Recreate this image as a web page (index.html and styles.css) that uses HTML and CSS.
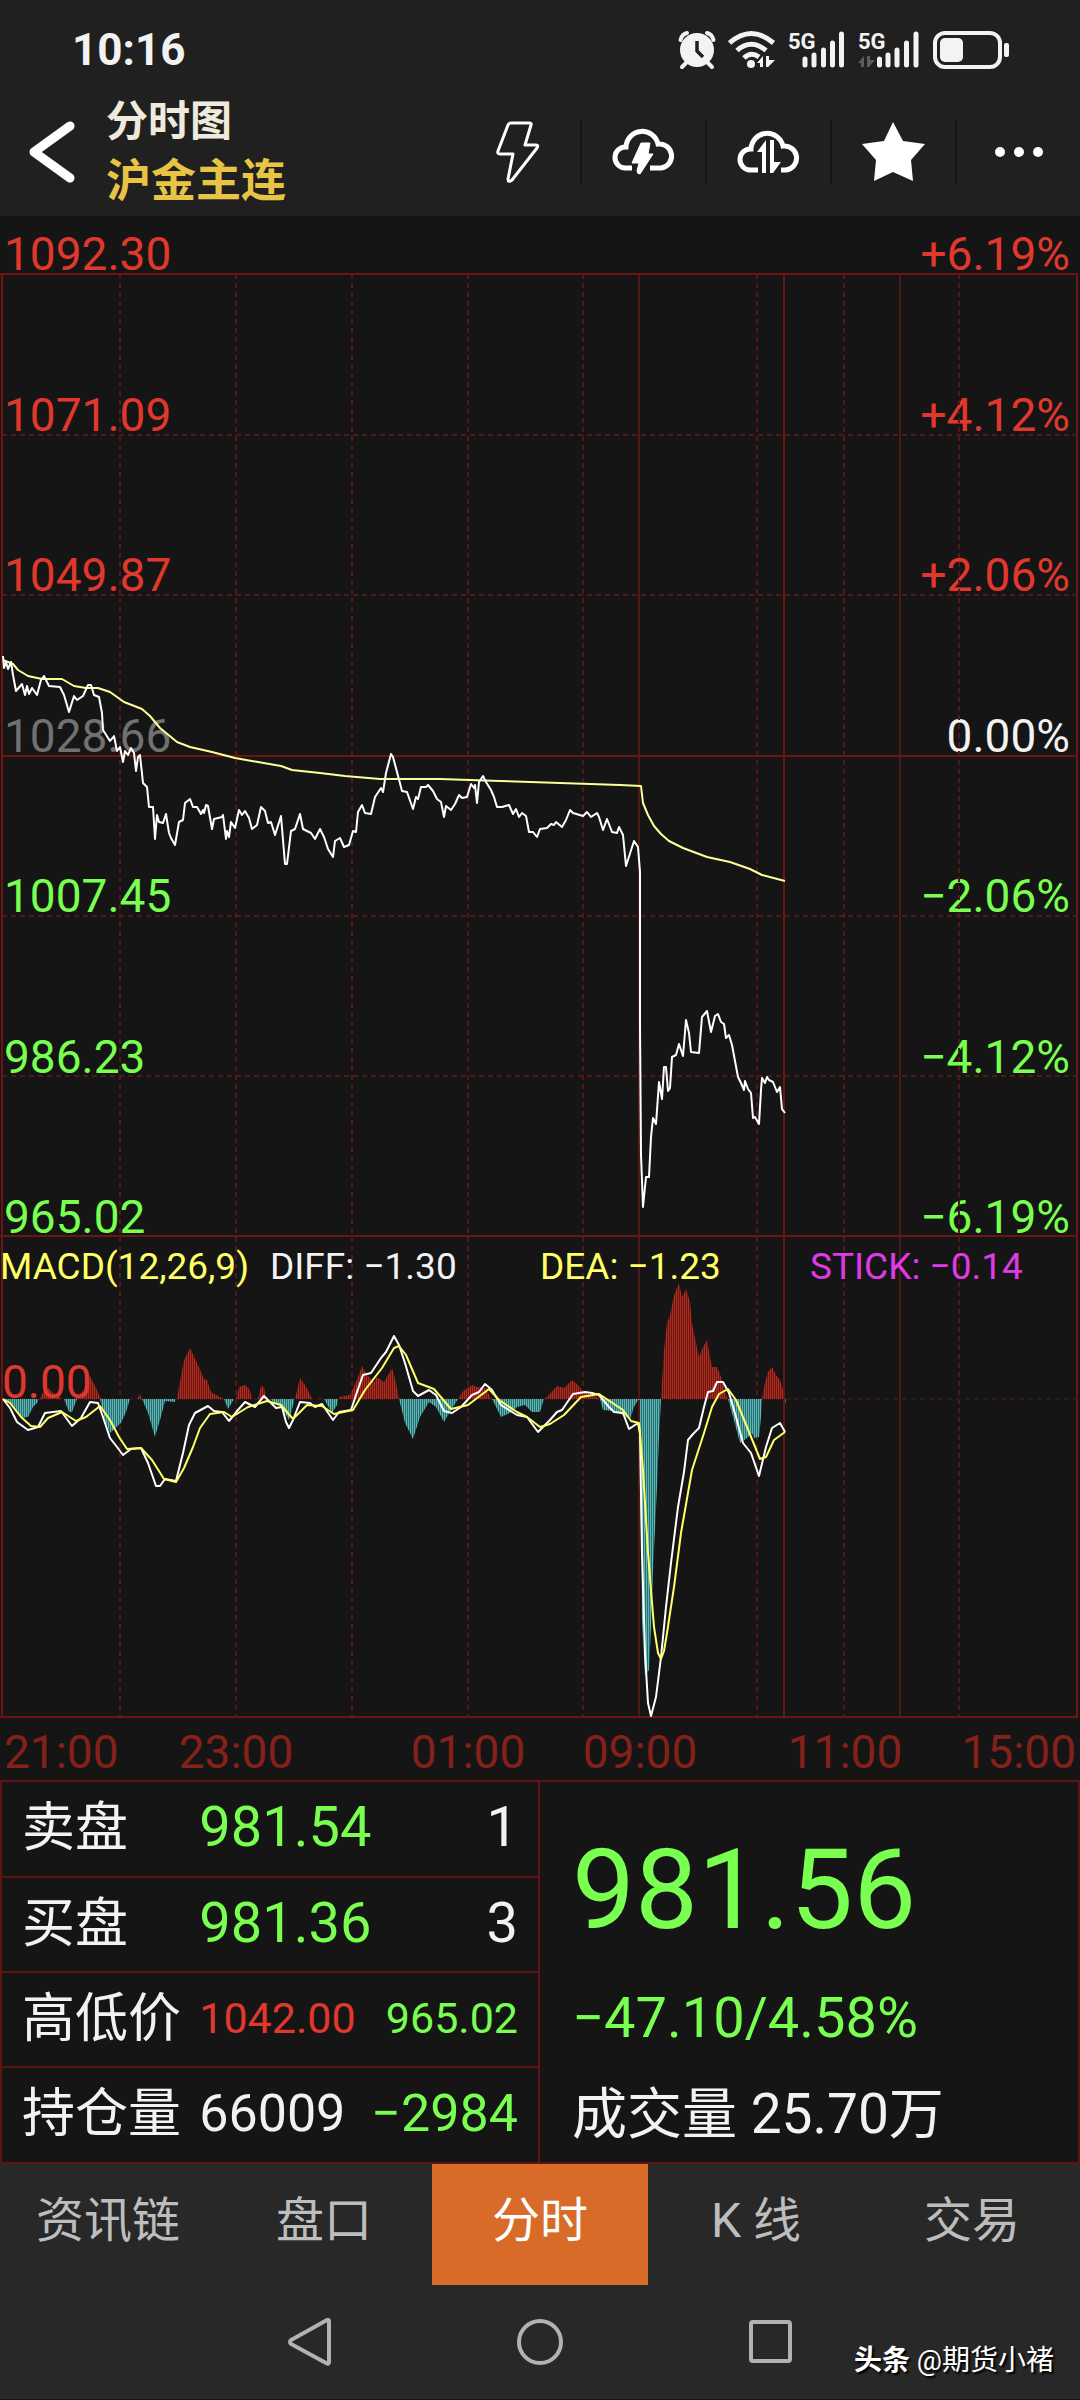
FILE: index.html
```html
<!DOCTYPE html>
<html lang="zh-CN">
<head>
    <meta charset="UTF-8">
    <meta name="viewport" content="width=device-width, initial-scale=1.0">
    <title>沪金主连 分时图</title>
    <link rel="stylesheet" href="styles.css">
</head>
<body>
    <div class="app">
        <header class="header">
            <div class="status-bar">
                <span class="clock">10:16</span>
                <div class="status-icons">
                    <!-- Alarm -->
                    <svg width="38" height="40" viewBox="0 0 38 40">
                        <g fill="none" stroke="#f3f3f3" stroke-linecap="round">
                            <path d="M2.500 10Q4 4 9 3M35.500 10Q34 4 29 3" stroke-width="4"/>
                            <path d="M8 33L4 37M30 33L34 37" stroke-width="4"/>
                        </g>
                        <circle cx="19" cy="20" r="17" fill="#f3f3f3"/>
                        <path d="M19 11V21L25 27" fill="none" stroke="#202020" stroke-width="3.500"/>
                    </svg>
                    <!-- Wifi -->
                    <svg width="48" height="40" viewBox="0 0 48 40">
                        <g fill="none" stroke="#f3f3f3" stroke-width="5">
                            <path d="M1.500 13Q23 -6 45.500 13"/>
                            <path d="M9 20.500Q23 8 38 20.500"/>
                            <path d="M16 28Q23 21 31 27"/>
                        </g>
                        <circle cx="23" cy="34" r="4" fill="#f3f3f3"/>
                        <path d="M29 33L35 26V37H32V33ZM38 26H41V30H47L40 37H38Z" fill="#f3f3f3"/>
                    </svg>
                    <!-- SIM 1 -->
                    <svg width="58" height="56" viewBox="0 -8 58 56">
                        <text x="0" y="19" class="net-type">5G</text>
                        <path d="M17 29V35M26 25V35M35.500 20V35M44.500 13V35M53.500 4V35" class="signal"/>
                    </svg>
                    <!-- SIM 2 -->
                    <svg width="62" height="56" viewBox="0 -8 62 56">
                        <text x="0" y="19" class="net-type">5G</text>
                        <path d="M0 33L6 26V37H3V33ZM9 26H12V30H17L11 37H9Z" fill="#5c5c5c"/>
                        <path d="M21.500 29V35M30 25V35M39 20V35M48.500 13V35M58 4V35" class="signal"/>
                    </svg>
                    <!-- Battery -->
                    <svg width="78" height="40" viewBox="0 0 78 40">
                        <rect x="3" y="3" width="65" height="34" rx="10" fill="none" stroke="#f3f3f3" stroke-width="4"/>
                        <rect x="8" y="8" width="23" height="24" rx="5" fill="#f3f3f3"/>
                        <rect x="72" y="13" width="5" height="14" rx="2" fill="#f3f3f3"/>
                    </svg>
                </div>
            </div>

            <div class="toolbar">
                <button class="back" aria-label="返回">
                    <svg width="48" height="64" viewBox="0 0 48 64">
                        <path d="M42 6L6 32L42 58" fill="none" stroke="#fff" stroke-width="9" stroke-linecap="round" stroke-linejoin="round"/>
                    </svg>
                </button>
                <div class="title">
                    <h1>分时图</h1>
                    <h2>沪金主连</h2>
                </div>
                <div class="actions">
                    <button aria-label="闪电下单">
                        <svg width="64" height="64" viewBox="0 0 64 64">
                            <path d="M25 3H43Q46 3 45 5L39 25H50Q53 25 51 28L26 60Q22 63 22 59L27 34H14Q11 34 12 31L22 5Q23 3 25 3Z" fill="none" stroke="#fff" stroke-width="3" stroke-linejoin="round"/>
                        </svg>
                    </button>
                    <button aria-label="云条件单">
                        <svg width="64" height="64" viewBox="0 0 64 64">
                            <path d="M20 48H13A10.500 10.500 0 0 1 14 27A16.200 16.200 0 0 1 46 24A12 12 0 0 1 49 48H38" fill="none" stroke="#fff" stroke-width="5"/>
                            <path d="M29 23H38L36 34H41L28 54Q25 54 25 51L27 43H20Z" fill="#fff" stroke="#fff" stroke-width="1" stroke-linejoin="round"/>
                        </svg>
                    </button>
                    <button aria-label="云止损">
                        <svg width="64" height="64" viewBox="0 0 64 64">
                            <path d="M21 50H13A10.500 10.500 0 0 1 14 29A16.200 16.200 0 0 1 46 26A12 12 0 0 1 49 50H44" fill="none" stroke="#fff" stroke-width="5"/>
                            <path d="M20 32L29 20V53H25V32ZM33 20H37V42H44L36 53H33Z" fill="#fff"/>
                        </svg>
                    </button>
                    <button aria-label="自选">
                        <svg width="64" height="64" viewBox="0 0 64 64">
                            <path d="M31 2L41 21L63 24L49 40L51 61L31 52L12 61L14 40L0 24L22 21Z" fill="#fff"/>
                        </svg>
                    </button>
                    <button aria-label="更多">
                        <svg width="64" height="64" viewBox="0 0 64 64" fill="#fff">
                            <circle cx="13" cy="32" r="5"/>
                            <circle cx="32" cy="32" r="5"/>
                            <circle cx="51" cy="32" r="5"/>
                        </svg>
                    </button>
                </div>
            </div>
        </header>

        <main>
            <!-- Price chart -->
            <section class="panel">
                <div class="scales">
                    <ul class="scale">
                        <li class="up">1092.30</li>
                        <li class="up">1071.09</li>
                        <li class="up">1049.87</li>
                        <li class="base">1028.66</li>
                        <li class="down">1007.45</li>
                        <li class="down">986.23</li>
                        <li class="down">965.02</li>
                    </ul>
                    <ul class="scale right">
                        <li class="up">+6.19%</li>
                        <li class="up">+4.12%</li>
                        <li class="up">+2.06%</li>
                        <li>0.00%</li>
                        <li class="down">−2.06%</li>
                        <li class="down">−4.12%</li>
                        <li class="down">−6.19%</li>
                    </ul>
                </div>
                <svg class="plot" viewBox="0 216 1080 1021">
                    <path class="grid dashed" d="M120 274V1237M236 274V1237M352 274V1237M468 274V1237M583 274V1237M757 274V1237M844 274V1237M959 274V1237M2 435H1077M2 595H1077M2 916H1077M2 1076H1077"/>
                    <path class="grid thin" d="M639 274V1237M900 274V1237"/>
                    <path class="grid" d="M784 274V1237M2 756H1077M0 274H1078M2 274V1237M1077 274V1237M0 1236H1078"/>
                    <polyline class="line average" points="3,660 13,664 18,670 28,676 42,679 62,679 74,686 86,688 98,688 110,692 124,702 142,709 150,716 160,728 177,742 190,747 212,752 235,758 258,762 281,766 292,770 320,773 345,776 380,779 440,779 500,781 560,783 620,785 641,786 643,803 648,815 654,826 661,834 669,841 683,848 707,857 730,862 750,869 762,875 785,881"/>
                    <polyline class="line" points="3,656 4,668 6,662 8,669 11,662 13,675 16,691 22,684 25,695 27,686 29,694 32,688 37,695 41,680 44,676 49,686 60,687 64,695 69,712 74,696 77,700 83,696 88,685 91,685 94,695 99,697 102,713 103,730 110,741 114,736 117,751 120,747 123,762 125,751 128,755 131,748 134,753 136,771 138,757 140,755 143,783 147,787 149,807 153,807 155,839 157,815 159,822 163,823 166,814 169,833 171,838 175,845 179,822 183,820 185,803 190,799 193,807 197,807 201,814 203,810 204,813 206,805 208,806 212,829 214,819 222,817 223,815 226,839 227,831 229,837 231,822 235,828 239,810 242,815 245,811 249,818 252,829 257,825 261,807 265,811 268,823 271,822 275,835 281,816 285,864 287,864 291,831 295,829 300,814 303,829 311,833 315,839 320,829 324,837 328,849 333,857 335,841 340,838 344,847 349,845 353,831 356,832 358,812 362,805 365,813 371,814 375,797 381,788 383,792 386,773 391,754 393,757 397,772 402,791 407,792 413,809 416,797 418,799 421,787 426,787 428,785 433,791 437,799 441,802 444,817 446,806 451,810 455,804 459,795 462,798 467,797 471,784 474,788 475,785 477,803 479,782 483,776 486,782 491,790 494,797 497,807 502,807 509,805 513,814 516,809 519,817 522,813 526,816 529,832 533,832 537,837 540,829 547,828 551,824 554,825 556,822 562,827 566,820 570,810 573,813 583,816 587,812 591,817 597,813 599,817 603,830 607,819 612,832 617,833 619,827 623,835 626,866 634,841 638,847 640,872 640,1027 641,1155 643,1207 646,1177 649,1177 651,1137 653,1118 656,1124 659,1082 662,1099 664,1067 666,1067 668,1091 670,1088 672,1057 676,1055 679,1044 683,1056 686,1020 689,1033 691,1052 699,1053 702,1017 707,1011 711,1032 715,1016 718,1014 721,1022 724,1024 726,1038 729,1035 732,1045 738,1077 741,1083 744,1090 745,1081 748,1089 751,1093 753,1118 755,1117 759,1124 761,1090 762,1078 765,1083 767,1077 769,1080 773,1082 777,1092 780,1087 782,1109 785,1113"/>
                </svg>
            </section>

            <!-- MACD -->
            <section class="panel">
                <svg class="plot" viewBox="0 1237 1080 481">
                    <defs>
                        <pattern id="redBars" width="2" height="4" patternUnits="userSpaceOnUse">
                            <rect width="2" height="4" fill="#661812"/>
                            <rect width="1" height="4" fill="#b32a1f"/>
                        </pattern>
                        <pattern id="tealBars" width="2" height="4" patternUnits="userSpaceOnUse">
                            <rect width="2" height="4" fill="#2d6d6d"/>
                            <rect width="1" height="4" fill="#58b8b8"/>
                        </pattern>
                    </defs>
                    <path class="grid dashed" d="M120 1237V1717M236 1237V1717M352 1237V1717M468 1237V1717M583 1237V1717M757 1237V1717M844 1237V1717M959 1237V1717"/>
                    <path class="grid dashed zero" d="M2 1399H1077"/>
                    <path class="grid thin" d="M639 1237V1717M900 1237V1717"/>
                    <path class="grid" d="M784 1237V1717M2 1237V1717M1077 1237V1717M0 1717H1078"/>
                    <path fill="url(#redBars)" d="M40 1399L46 1386L52 1392L62 1399Z
                        M74 1399L84 1390L90 1376L96 1388L101 1399Z
                        M137 1399L140 1394L142 1399Z
                        M177 1399L179 1387L184 1360L190 1348L198 1365L204 1379L207 1380L211 1392L220 1397L224 1399Z
                        M236 1399L239 1387L245 1385L250 1390L252 1399Z
                        M258 1399L261 1386L264 1387L266 1399Z
                        M295 1399L300 1378L307 1388L312 1399Z
                        M339 1399V1397L350 1395L356 1382L362 1366L367 1375L374 1382L377 1377L384 1382L392 1368L396 1383L399 1399Z
                        M458 1399L463 1391L472 1385L477 1387L486 1388L491 1399Z
                        M545 1399L557 1386L564 1388L572 1380L580 1387L583 1392L592 1395L602 1399Z
                        M661 1399L664 1350L667 1323L670 1315L674 1295L679 1283L682 1297L686 1289L690 1302L692 1323L697 1348L699 1357L703 1347L707 1340L710 1357L712 1367H717L721 1377L726 1395L728 1399Z
                        M762 1399L765 1382L768 1372L772 1367L776 1375L780 1380L784 1393V1399Z"/>
                    <path fill="url(#tealBars)" d="M4 1399L14 1407L21 1418L28 1417L33 1407L38 1402V1399Z
                        M64 1399L69 1412H72L77 1399Z
                        M100 1399L105 1420L110 1433L121 1423L126 1412L130 1399Z
                        M142 1399L148 1413L155 1437L160 1420L165 1401L175 1402V1399Z
                        M224 1399L228 1409L234 1399Z
                        M270 1399L281 1407L289 1420L294 1402V1399Z
                        M324 1399L332 1413L337 1405L338 1399Z
                        M399 1399L405 1423L413 1439L420 1417L429 1402L436 1407L444 1422L451 1410L458 1399Z
                        M492 1399L501 1417L510 1413L517 1407L525 1405L532 1412H540L543 1402L544 1399Z
                        M600 1399L603 1410L614 1411L623 1415L630 1419L634 1407L638 1400H640V1453L642 1620L645 1676L649 1670L651 1627L653 1570L657 1487L659 1437L661 1399Z
                        M728 1399L733 1417L740 1443L747 1438L752 1433L754 1438L759 1437L761 1417L762 1399Z
                        M785 1399H786V1403H785Z"/>
                    <polyline class="line" points="3,1399 10,1408 17,1422 28,1430 38,1427 45,1413 61,1411 72,1426 81,1418 90,1402 98,1403 103,1417 110,1438 117,1447 123,1455 131,1449 141,1448 148,1463 156,1486 160,1486 165,1479 176,1481 183,1453 189,1425 195,1413 208,1406 214,1411 222,1412 229,1421 238,1410 245,1402 255,1407 264,1396 270,1402 276,1408 282,1407 286,1422 289,1428 293,1420 300,1402 310,1403 315,1407 322,1404 333,1420 339,1412 351,1410 356,1395 363,1375 371,1373 381,1358 386,1352 394,1336 399,1345 405,1363 413,1391 418,1396 429,1390 436,1395 444,1411 452,1413 461,1407 472,1395 479,1392 485,1384 492,1390 501,1405 517,1415 527,1417 538,1432 550,1420 557,1412 562,1410 573,1394 585,1392 592,1393 599,1395 609,1407 614,1412 623,1413 629,1429 638,1423 640,1433 642,1553 645,1653 648,1703 651,1716 656,1697 661,1657 666,1607 671,1563 678,1507 684,1472 688,1440 693,1434 699,1428 704,1407 708,1392 713,1391 717,1382 723,1382 729,1393 736,1417 743,1443 751,1453 759,1476 766,1447 772,1428 780,1423 785,1432"/>
                    <polyline class="line dea" points="3,1399 10,1403 21,1417 31,1426 40,1427 48,1418 62,1412 76,1421 86,1417 100,1406 110,1420 119,1437 127,1449 141,1448 152,1460 164,1479 176,1482 184,1468 193,1447 200,1428 210,1414 224,1412 232,1417 248,1407 267,1401 281,1405 293,1419 307,1405 322,1406 334,1414 353,1410 365,1390 382,1368 394,1348 399,1346 406,1355 418,1383 434,1389 451,1409 468,1405 489,1389 499,1400 517,1412 527,1417 540,1427 550,1424 564,1415 581,1397 599,1394 623,1410 631,1421 639,1423 643,1470 648,1553 654,1627 658,1653 661,1659 664,1651 667,1633 674,1587 681,1533 692,1470 704,1433 712,1407 719,1394 728,1389 736,1400 747,1427 760,1459 766,1457 774,1440 785,1432"/>
                </svg>
                <div class="legend">
                    <span class="yellow">MACD(12,26,9)</span>
                    <span>DIFF: −1.30</span>
                    <span class="yellow">DEA: −1.23</span>
                    <span class="purple">STICK: −0.14</span>
                </div>
                <span class="zero-label up">0.00</span>
            </section>

            <div class="times">
                <span>21:00</span>
                <span>23:00</span>
                <span>01:00</span>
                <span>09:00</span>
                <span>11:00</span>
                <span>15:00</span>
            </div>

            <section class="quote">
                <table class="book">
                    <tr>
                        <th scope="row">卖盘</th>
                        <td class="down">981.54</td>
                        <td>1</td>
                    </tr>
                    <tr>
                        <th scope="row">买盘</th>
                        <td class="down">981.36</td>
                        <td>3</td>
                    </tr>
                    <tr class="small">
                        <th scope="row">高低价</th>
                        <td class="up">1042.00</td>
                        <td class="down">965.02</td>
                    </tr>
                    <tr class="medium">
                        <th scope="row">持仓量</th>
                        <td>66009</td>
                        <td class="down">−2984</td>
                    </tr>
                </table>
                <div class="last">
                    <p class="price down">981.56</p>
                    <p class="change down">−47.10/4.58%</p>
                    <p class="volume">成交量 25.70万</p>
                </div>
            </section>
        </main>

        <nav class="tabs">
            <button>资讯链</button>
            <button>盘口</button>
            <button class="active">分时</button>
            <button>K 线</button>
            <button>交易</button>
        </nav>

        <footer class="system-nav">
            <button aria-label="后退">
                <svg width="48" height="48" viewBox="0 0 48 48">
                    <path d="M41 2Q43 1 43 4V44Q43 47 40 45L5 26Q3 24 5 22Z" class="nav-icon"/>
                </svg>
            </button>
            <button aria-label="主页">
                <svg width="48" height="48" viewBox="0 0 48 48">
                    <circle cx="24" cy="24" r="21" class="nav-icon"/>
                </svg>
            </button>
            <button aria-label="最近任务">
                <svg width="48" height="48" viewBox="0 0 48 48">
                    <rect x="5" y="4" width="39" height="39" rx="2" class="nav-icon"/>
                </svg>
            </button>
            <p class="watermark"><b>头条</b> @期货小褚</p>
        </footer>
    </div>
</body>
</html>
```
FILE: styles.css
```css
* {
    box-sizing: border-box;
}

body {
    margin: 0;
    background-color: #151515;
    color: #f2f2f2;
    font-family: Roboto, "Noto Sans CJK SC", sans-serif;
}

button {
    padding: 0;
    border: none;
    background: none;
    color: inherit;
    font-family: inherit;
    cursor: pointer;
}

svg {
    display: block;
}

h1, h2, p, ul {
    margin: 0;
    padding: 0;
}

.up {
    color: #e0382d;
}

.down {
    color: #78ff50;
}

.base {
    color: #717171;
}

.yellow {
    color: #ffff66;
}

.purple {
    color: #e03ae6;
}

/* Header */
.header {
    background-color: #202020;
}

.status-bar {
    display: flex;
    justify-content: space-between;
    align-items: center;
    height: 84px;
    padding: 16px 70px 0 72px;
}

.clock {
    font-size: 44px;
    font-weight: bold;
}

.status-icons {
    display: flex;
    align-items: center;
    gap: 12px;
}

.net-type {
    font-size: 22px;
    font-weight: bold;
    fill: #f3f3f3;
}

.signal {
    fill: none;
    stroke: #f3f3f3;
    stroke-width: 5;
    stroke-linecap: round;
}

.toolbar {
    display: flex;
    align-items: center;
    height: 132px;
    padding-top: 4px;
}

.back {
    margin: 0 30px 0 28px;
}

.title h1 {
    color: #eeeadc;
    font-size: 42px;
    font-weight: bold;
    line-height: 60px;
}

.title h2 {
    color: #e8c445;
    font-size: 45px;
    font-weight: bold;
    line-height: 60px;
}

.actions {
    display: flex;
    margin-left: auto;
}

.actions button {
    display: flex;
    justify-content: center;
    width: 125px;
}

.actions button + button {
    border-left: 2px solid #151515;
}

/* Charts */
.panel {
    position: relative;
}

.plot {
    position: relative;
    width: 100%;
    height: auto;
}

.grid {
    fill: none;
    stroke: #6c1512;
    stroke-width: 2;
}

.grid.thin {
    stroke-width: 1;
    stroke: #8a1f1a;
}

.grid.dashed {
    stroke: #511a18;
    stroke-dasharray: 5 4;
}

.grid.zero {
    stroke: #35191a;
}

.line {
    fill: none;
    stroke: #fff;
    stroke-width: 2;
    stroke-linejoin: round;
}

.line.average {
    stroke: #ffff99;
}

.line.dea {
    stroke: #ffff66;
}

.scales {
    position: absolute;
    inset: 0;
    display: flex;
    justify-content: space-between;
    padding: 18px 10px 0 4px;
}

.scale {
    display: flex;
    flex-direction: column;
    justify-content: space-between;
    list-style: none;
    font-size: 46px;
    line-height: 40px;
}

.right {
    text-align: right;
}

.legend {
    position: absolute;
    top: 0;
    left: 0;
    right: 0;
    display: grid;
    grid-template-columns: repeat(4, 1fr);
    font-size: 37px;
    line-height: 60px;
    white-space: nowrap;
}

.zero-label {
    position: absolute;
    top: 26%;
    left: 2px;
    font-size: 46px;
    line-height: 40px;
}

.times {
    display: grid;
    grid-template-columns: 120fr 232fr 232fr 112fr 298fr 86fr;
    height: 62px;
    padding-top: 6px;
    color: #86201a;
    font-size: 46px;
    line-height: 56px;
}

.times span {
    display: flex;
    justify-content: center;
    min-width: 0;
}

.times span:first-child {
    justify-content: flex-start;
    padding-left: 4px;
}

.times span:last-child {
    justify-content: flex-end;
    padding-right: 4px;
}

/* Quote */
.quote {
    display: grid;
    grid-template-columns: 1fr 1fr;
    border: 2px solid #5e1512;
}

.book {
    width: 100%;
    border-collapse: collapse;
    border-right: 2px solid #5e1512;
    font-size: 56px;
}

.book tr + tr {
    border-top: 2px solid #5e1512;
}

.book th {
    width: 200px;
    height: 95px;
    padding: 0 0 2px 20px;
    font-size: 53px;
    font-weight: normal;
    line-height: 80px;
    text-align: left;
    white-space: nowrap;
}

.book td {
    padding: 0 0 4px;
}

.book td:last-child {
    padding-right: 20px;
    text-align: right;
}

.book .small td {
    font-size: 43px;
}

.book .medium td {
    font-size: 52px;
}

.last {
    padding: 42px 0 0 32px;
}

.price {
    font-size: 112px;
    line-height: 132px;
}

.change {
    margin-top: 14px;
    font-size: 56px;
    line-height: 96px;
}

.volume {
    font-size: 55px;
    line-height: 96px;
}

/* Bottom */
.tabs {
    display: grid;
    grid-template-columns: repeat(5, 1fr);
    background-color: #282828;
}

.tabs button {
    height: 121px;
    padding-bottom: 18px;
    color: #bdbdbd;
    font-size: 48px;
}

.tabs .active {
    background-color: #d86b28;
    color: #fff;
}

.system-nav {
    position: relative;
    display: flex;
    justify-content: center;
    align-items: center;
    gap: 182px;
    height: 114px;
    background-color: #282828;
}

.nav-icon {
    fill: none;
    stroke: #b2b2b2;
    stroke-width: 4;
}

.watermark {
    position: absolute;
    right: 26px;
    bottom: 18px;
    color: #fff;
    font-size: 28px;
    line-height: 40px;
    text-shadow: 2px 2px 2px #000;
}
```
